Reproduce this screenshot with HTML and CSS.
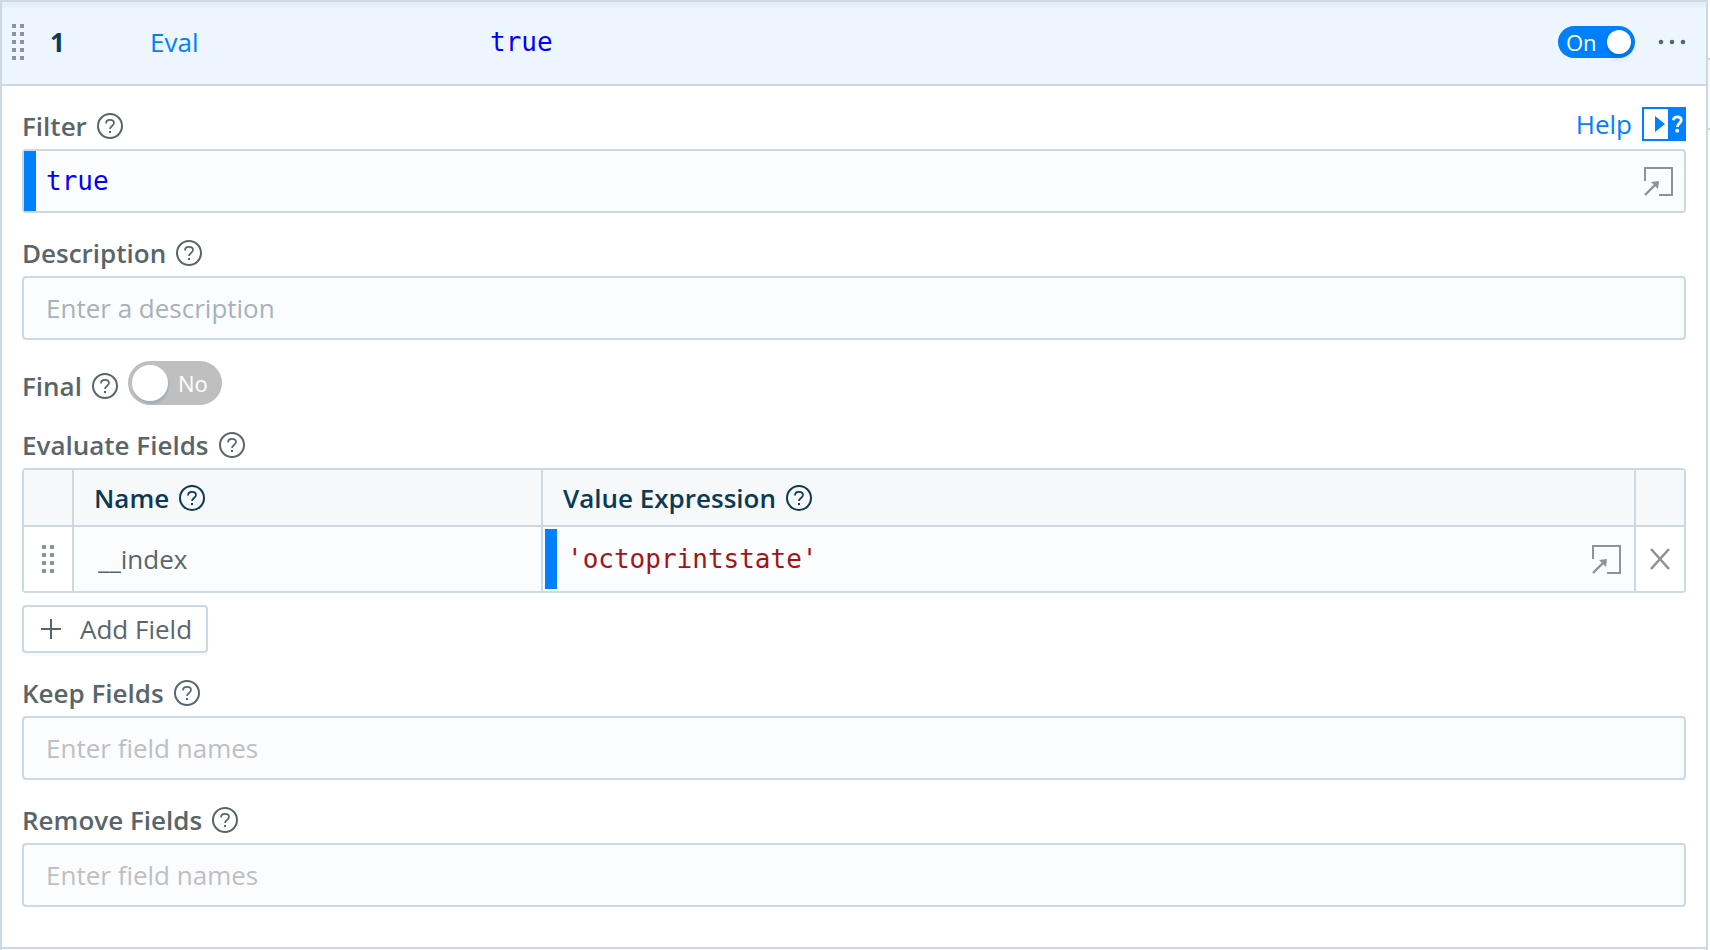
FILE: index.html
```html
<!DOCTYPE html>
<html lang="en">
<head>
    <meta charset="UTF-8">
    <meta name="viewport" content="width=device-width, initial-scale=1.0">
    <title>Eval Function</title>
    <link rel="stylesheet" href="styles.css">
</head>
<body>
    <!-- shared icons -->
    <svg class="sprite" aria-hidden="true">
        <symbol id="icon-help" viewBox="0 0 26 26">
            <circle cx="13" cy="13" r="12" fill="none" stroke="currentColor" stroke-width="2"/>
            <path d="M9 10.4c0-2.2 1.7-3.6 4-3.6s4 1.3 4 3.3c0 3-4 2.9-4 6" fill="none" stroke="currentColor" stroke-width="1.7"/>
            <rect x="12" y="18" width="2" height="2" fill="currentColor"/>
        </symbol>
        <symbol id="icon-expand" viewBox="0 0 29 29">
            <path d="M1 14V1h27v27H15" fill="none" stroke="currentColor" stroke-width="2"/>
            <path d="M1 28L12 17" fill="none" stroke="currentColor" stroke-width="2.4"/>
            <path d="M7 15l8-1-1 8z" fill="currentColor"/>
        </symbol>
    </svg>

    <div class="page">
        <main class="function-list">
            <article class="function">
                <header class="function-header">
                    <svg class="grip" width="12" height="36" viewBox="0 0 12 36" fill="currentColor" aria-hidden="true">
                        <path d="M0 0h4v4H0zM8 0h4v4H8zM0 8h4v4H0zM8 8h4v4H8zM0 16h4v4H0zM8 16h4v4H8zM0 24h4v4H0zM8 24h4v4H8zM0 32h4v4H0zM8 32h4v4H8z"/>
                    </svg>
                    <span class="function-order">1</span>
                    <a class="function-name" href="#">Eval</a>
                    <code class="function-filter">true</code>
                    <label class="switch switch-on">
                        <input type="checkbox" checked>
                        <span>On</span>
                    </label>
                    <button class="icon-btn" type="button" aria-label="More options">
                        <svg width="28" height="6" viewBox="0 0 28 6" fill="currentColor">
                            <circle cx="3" cy="3" r="2.3"/>
                            <circle cx="14" cy="3" r="2.3"/>
                            <circle cx="25" cy="3" r="2.3"/>
                        </svg>
                    </button>
                </header>

                <form class="function-body">
                    <div class="field">
                        <div class="field-head">
                            <label class="field-label" for="filter">Filter <svg class="help-icon"><use href="#icon-help"/></svg></label>
                            <a class="help-link" href="#">
                                Help
                                <svg width="44" height="34" viewBox="0 0 44 34" aria-hidden="true">
                                    <rect width="44" height="34" fill="#0080ff"/>
                                    <rect x="2" y="2" width="24" height="30" fill="#fff"/>
                                    <path d="M13 9l10 8-10 8z" fill="#0080ff"/>
                                    <path d="M31.200 13.200c.4-2.300 2-3.400 4.100-3.400 2.500 0 4 1.300 4 3.300 0 3.300-4 3.200-4 6.800" fill="none" stroke="#fff" stroke-width="2.800"/>
                                    <circle cx="35.200" cy="23.700" r="1.900" fill="#fff"/>
                                </svg>
                            </a>
                        </div>
                        <div class="editor editor-boxed">
                            <input class="code keyword" id="filter" type="text" value="true">
                            <button class="icon-btn" type="button" aria-label="Expand editor">
                                <svg class="expand-icon"><use href="#icon-expand"/></svg>
                            </button>
                        </div>
                    </div>

                    <div class="field">
                        <label class="field-label" for="description">Description <svg class="help-icon"><use href="#icon-help"/></svg></label>
                        <input class="text-input" id="description" type="text" placeholder="Enter a description">
                    </div>

                    <div class="field field-inline">
                        <label class="field-label" for="final">Final <svg class="help-icon"><use href="#icon-help"/></svg></label>
                        <label class="switch switch-off">
                            <input id="final" type="checkbox">
                            <span>No</span>
                        </label>
                    </div>

                    <div class="field">
                        <div class="field-label" id="evaluate-label">Evaluate Fields <svg class="help-icon"><use href="#icon-help"/></svg></div>
                        <table class="fields-table" aria-labelledby="evaluate-label">
                            <thead>
                                <tr>
                                    <th class="col-drag"></th>
                                    <th class="col-name"><span class="th-label">Name <svg class="help-icon"><use href="#icon-help"/></svg></span></th>
                                    <th><span class="th-label">Value Expression <svg class="help-icon"><use href="#icon-help"/></svg></span></th>
                                    <th class="col-remove"></th>
                                </tr>
                            </thead>
                            <tbody>
                                <tr>
                                    <td class="cell-action">
                                        <svg class="grip" width="12" height="28" viewBox="0 0 12 28" fill="currentColor" aria-hidden="true">
                                            <path d="M0 0h4v4H0zM8 0h4v4H8zM0 8h4v4H0zM8 8h4v4H8zM0 16h4v4H0zM8 16h4v4H8zM0 24h4v4H0zM8 24h4v4H8z"/>
                                        </svg>
                                    </td>
                                    <td><input class="cell-input" type="text" value="__index" aria-label="Name"></td>
                                    <td>
                                        <div class="editor editor-cell">
                                            <input class="code string" type="text" value="'octoprintstate'" aria-label="Value Expression">
                                            <button class="icon-btn" type="button" aria-label="Expand editor">
                                                <svg class="expand-icon"><use href="#icon-expand"/></svg>
                                            </button>
                                        </div>
                                    </td>
                                    <td class="cell-action">
                                        <button class="icon-btn" type="button" aria-label="Remove field">
                                            <svg width="20" height="22" viewBox="0 0 20 22" fill="none" stroke="currentColor" stroke-width="2.600">
                                                <path d="M1 1l18 20M19 1L1 21"/>
                                            </svg>
                                        </button>
                                    </td>
                                </tr>
                            </tbody>
                        </table>
                        <button class="add-btn" type="button">
                            <svg width="20" height="20" viewBox="0 0 20 20" stroke="currentColor" stroke-width="2" aria-hidden="true">
                                <path d="M10 0v20M0 10h20"/>
                            </svg>
                            Add Field
                        </button>
                    </div>

                    <div class="field">
                        <label class="field-label" for="keep">Keep Fields <svg class="help-icon"><use href="#icon-help"/></svg></label>
                        <input class="text-input tags-input" id="keep" type="text" placeholder="Enter field names">
                    </div>

                    <div class="field">
                        <label class="field-label" for="remove">Remove Fields <svg class="help-icon"><use href="#icon-help"/></svg></label>
                        <input class="text-input tags-input" id="remove" type="text" placeholder="Enter field names">
                    </div>
                </form>
            </article>
        </main>
        <aside class="side-panel">
            <div class="side-tab"></div>
        </aside>
    </div>
</body>
</html>
```
FILE: styles.css
```css
* {
    margin: 0;
    padding: 0;
    box-sizing: border-box;
}

:root {
    --border: #cdd9e0;
    --blue: #0080ff;
    --navy: #0b3a53;
    --text: #59656b;
    --icon: #8a9499;
    --input-bg: #fbfcfe;
}

body {
    font-family: "Open Sans", sans-serif;
    font-size: 26px;
    line-height: 38px;
    color: var(--text);
    background: #fff;
}

input,
button {
    font: inherit;
    color: inherit;
    border: none;
    background: none;
}

input {
    outline: none;
    min-width: 0;
}

button {
    cursor: pointer;
}

a {
    color: var(--blue);
    text-decoration: none;
}

svg {
    display: block;
    flex-shrink: 0;
}

.sprite {
    position: absolute;
    width: 0;
    height: 0;
}

.page {
    display: flex;
    min-height: 100vh;
}

.function-list {
    flex: 1;
    border: 2px solid var(--border);
    border-bottom: none;
}

.function {
    border-bottom: 2px solid var(--border);
}

/* header row */
.function-header {
    display: flex;
    align-items: center;
    height: 84px;
    padding: 0 20px 2px 10px;
    background: #edf6fe;
    border-bottom: 2px solid var(--border);
    box-shadow: inset 0 6px 3px -1px #e6edf4;
}

.grip {
    color: var(--icon);
}

.function-order {
    width: 100px;
    margin-left: 26px;
    font-weight: 700;
    color: var(--navy);
}

.function-name {
    width: 340px;
}

.function-filter {
    flex: 1;
    color: #0000ff;
}

.function-header .icon-btn {
    margin-left: 23px;
}

code,
.code {
    font-family: "DejaVu Sans Mono", monospace;
    font-size: 26px;
}

.icon-btn {
    display: flex;
    align-items: center;
    justify-content: center;
}

/* switches */
.switch {
    display: flex;
    align-items: center;
    color: #fff;
    cursor: pointer;
}

.switch input {
    appearance: none;
    background: #fff;
    border-radius: 50%;
}

.switch-on {
    flex-direction: row-reverse;
    justify-content: space-between;
    width: 77px;
    height: 32px;
    padding: 0 4px 0 8px;
    border-radius: 16px;
    background: var(--blue);
    font-size: 22px;
}

.switch-on input {
    width: 24px;
    height: 24px;
    box-shadow: 0 4px 6px rgba(0, 35, 11, 0.2);
}

.switch-off {
    gap: 10px;
    width: 94px;
    height: 44px;
    padding: 0 4px;
    border-radius: 22px;
    background: #bfbfbf;
    font-size: 22px;
}

.switch-off input {
    width: 36px;
    height: 36px;
    box-shadow: 1px 3px 2px #a3b0b8;
}

/* form */
.function-body {
    display: flex;
    flex-direction: column;
    gap: 21px;
    padding: 21px 20px 40px;
}

.field-head {
    display: flex;
    justify-content: space-between;
}

.field-label {
    display: flex;
    align-items: center;
    gap: 10px;
    width: fit-content;
    margin-bottom: 4px;
    font-weight: 600;
}

.field-inline {
    display: flex;
    align-items: flex-end;
    gap: 10px;
}

.field-inline .field-label {
    margin: 0;
}

.help-icon {
    width: 26px;
    height: 26px;
}

.help-link {
    display: flex;
    align-items: center;
    gap: 10px;
    height: 34px;
}

.text-input {
    display: block;
    width: 100%;
    height: 64px;
    padding: 0 22px;
    border: 2px solid var(--border);
    border-radius: 4px;
    background: var(--input-bg);
}

.text-input::placeholder {
    color: #a7b2b9;
}

.tags-input::placeholder {
    color: #bfbfbf;
}

.editor {
    display: flex;
    align-items: center;
    padding-right: 11px;
    background: var(--input-bg);
}

.editor input {
    flex: 1;
    height: 60px;
    padding-left: 10px;
    border-left: 12px solid var(--blue);
}

.editor-boxed {
    border: 2px solid var(--border);
    border-radius: 4px;
}

.editor-cell {
    padding: 2px 13px 2px 2px;
}

.keyword {
    color: #0000ff;
}

.string {
    color: #a31515;
}

.expand-icon {
    width: 29px;
    height: 29px;
    color: var(--icon);
}

/* evaluate fields table */
.fields-table {
    width: 100%;
    table-layout: fixed;
    border: 2px solid var(--border);
    border-radius: 4px;
    border-collapse: separate;
    border-spacing: 0;
}

.fields-table th {
    height: 57px;
    padding: 0 20px;
    border-bottom: 2px solid var(--border);
    background: #f6f8fa;
    color: var(--navy);
    font-weight: 600;
}

.fields-table th + th,
.fields-table td + td {
    border-left: 2px solid var(--border);
}

.fields-table td {
    height: 64px;
    background: var(--input-bg);
}

.fields-table .col-drag {
    width: 48px;
    padding: 0;
}

.fields-table .col-name {
    width: 469px;
}

.fields-table .col-remove {
    width: 50px;
    padding: 0;
}

.th-label {
    display: flex;
    align-items: center;
    gap: 10px;
}

.fields-table .cell-action {
    background: #fff;
    color: var(--icon);
}

.cell-action .grip,
.cell-action .icon-btn {
    margin: 0 auto;
}

.cell-input {
    display: block;
    width: 100%;
    height: 64px;
    padding: 0 24px;
}

.add-btn {
    display: flex;
    align-items: center;
    gap: 19px;
    height: 48px;
    margin-top: 12px;
    padding: 0 14px 0 17px;
    border: 2px solid var(--border);
    border-radius: 4px;
    background: #fff;
    box-shadow: 0 3px 2px rgba(0, 30, 60, 0.03);
}

/* edge of the neighbouring panel */
.side-panel {
    width: 2px;
    padding-top: 58px;
}

.side-tab {
    height: 72px;
    border: solid var(--border);
    border-width: 2px 0;
    background: #f9fafc;
}
```
